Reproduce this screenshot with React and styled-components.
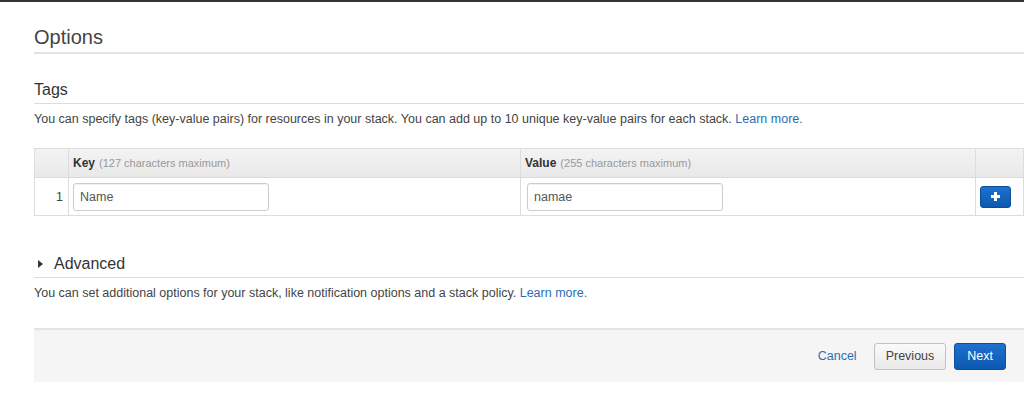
import React from "react";
import styled, { createGlobalStyle } from "styled-components";

const Global = createGlobalStyle`
  html, body { margin: 0; padding: 0; background: #fff; }
  body { font-family: "Liberation Sans", Arial, sans-serif; color: #444; overflow: hidden; }
  * { box-sizing: border-box; }
`;

const Page = styled.div`
  border-top: 2px solid #333;
  width: 1024px;
  height: 394px;
  padding-left: 34px;
`;

const Title = styled.h1`
  margin: 23px 0 0;
  font-size: 20px;
  font-weight: normal;
  line-height: 24px;
  color: #444;
  padding-bottom: 3px;
  border-bottom: 2px solid #e2e2e2;
`;

const SectionHead = styled.h2`
  margin: ${(p) => p.$top}px 0 0;
  font-size: 16px;
  font-weight: normal;
  line-height: 20px;
  color: #333;
  padding-bottom: 3px;
  border-bottom: 1px solid #dcdcdc;
  display: flex;
  align-items: center;
  gap: 11px;
`;

const Caret = styled.span`
  width: 0;
  height: 0;
  margin-left: 4px;
  border-top: 4px solid transparent;
  border-bottom: 4px solid transparent;
  border-left: 5px solid #333;
`;

const Desc = styled.p`
  margin: 7px 0 0;
  font-size: 12.5px;
  line-height: 16px;
  color: #444;
`;

const Link = styled.a`
  color: #2e6db4;
  text-decoration: none;
`;

const Table = styled.div`
  margin-top: 21px;
  border: 1px solid #ddd;
  display: grid;
  grid-template-columns: 33px 452px 455px 1fr;
`;

const HeadCell = styled.div`
  background: linear-gradient(#f3f3f3, #e9e9e9);
  height: 29px;
  border-left: ${(p) => (p.$first ? "none" : "1px solid #ddd")};
  border-bottom: 1px solid #d9d9d9;
  display: flex;
  align-items: center;
  padding-left: 4px;
  font-size: 12px;
  color: #333;
  b { font-weight: bold; margin-right: 4px; }
  span { color: #999; font-size: 11px; }
`;

const Cell = styled.div`
  height: 37px;
  border-left: ${(p) => (p.$first ? "none" : "1px solid #ddd")};
  display: flex;
  align-items: center;
  justify-content: ${(p) => p.$justify || "flex-start"};
  padding: 0 ${(p) => p.$pr || 0}px 0 ${(p) => p.$pl || 0}px;
  font-size: 12.5px;
  color: #444;
`;

const Input = styled.div`
  width: 196px;
  height: 28px;
  border: 1px solid #ccc;
  border-radius: 3px;
  box-shadow: inset 0 1px 1px rgba(0,0,0,0.06);
  display: flex;
  align-items: center;
  padding-left: 6px;
  font-size: 12.5px;
  color: #555;
`;

const AddBtn = styled.button`
  width: 31px;
  height: 22px;
  border: 1px solid #0a4f9c;
  border-radius: 3px;
  background: linear-gradient(#1f71cd, #0b58b0);
  display: flex;
  align-items: center;
  justify-content: center;
  padding: 0;
`;

const Footer = styled.div`
  margin-top: 27px;
  height: 54px;
  background: #f5f5f5;
  border-top: 2px solid #e4e4e4;
  display: flex;
  align-items: center;
  justify-content: flex-end;
  padding-right: 18px;
  gap: 8px;
`;

const CancelLink = styled.a`
  color: #2e6db4;
  font-size: 12.5px;
  margin-right: 9px;
  text-decoration: none;
`;

const Btn = styled.button`
  height: 27px;
  padding: 0 ${(p) => p.$px}px;
  border-radius: 3px;
  font-family: "Liberation Sans", Arial, sans-serif;
  font-size: 12.5px;
  border: 1px solid ${(p) => (p.$primary ? "#0a4f9c" : "#c2c2c2")};
  color: ${(p) => (p.$primary ? "#fff" : "#444")};
  background: ${(p) =>
    p.$primary ? "linear-gradient(#1f71cd, #0b58b0)" : "linear-gradient(#fafafa, #e9e9e9)"};
`;

export default function App() {
  return (
    <>
      <Global />
      <Page>
        <Title>Options</Title>
        <SectionHead $top={26}>Tags</SectionHead>
        <Desc>
          You can specify tags (key-value pairs) for resources in your stack. You can add up to 10 unique key-value pairs for each stack.{" "}
          <Link>Learn more.</Link>
        </Desc>
        <Table>
          <HeadCell $first />
          <HeadCell><b>Key</b><span>(127 characters maximum)</span></HeadCell>
          <HeadCell><b>Value</b><span>(255 characters maximum)</span></HeadCell>
          <HeadCell />
          <Cell $first $justify="flex-end" $pr={5}>1</Cell>
          <Cell $pl={4}><Input>Name</Input></Cell>
          <Cell $pl={6}><Input>namae</Input></Cell>
          <Cell $pl={4}>
            <AddBtn aria-label="add">
              <svg width="9" height="9" viewBox="0 0 9 9">
                <path d="M3 0h3v3h3v3H6v3H3V6H0V3h3z" fill="#fff" />
              </svg>
            </AddBtn>
          </Cell>
        </Table>
        <SectionHead $top={38}><Caret />Advanced</SectionHead>
        <Desc>
          You can set additional options for your stack, like notification options and a stack policy.{" "}
          <Link>Learn more.</Link>
        </Desc>
        <Footer>
          <CancelLink>Cancel</CancelLink>
          <Btn $px={11}>Previous</Btn>
          <Btn $primary $px={12}>Next</Btn>
        </Footer>
      </Page>
    </>
  );
}
